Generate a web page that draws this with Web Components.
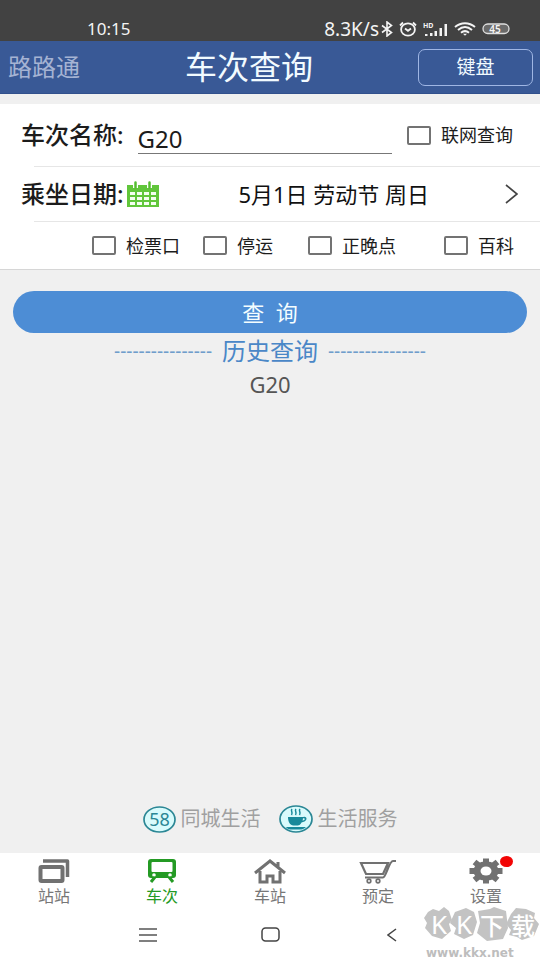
<!DOCTYPE html>
<html lang="zh-CN">
<head>
<meta charset="utf-8">
<meta name="viewport" content="width=device-width, initial-scale=1">
<title>车次查询</title>
<style>
html,body{margin:0;padding:0}
body{font-family:"Noto Sans","Noto Sans CJK SC",sans-serif;background:#f0f0f0;color:#1c1c1c}
</style>
</head>
<body>
<train-app></train-app>
<script>
const define = (name, html, setup) => {
  const t = document.createElement('template');
  t.innerHTML = '<style>*{box-sizing:border-box}svg{display:block;flex:none}button,input{font:inherit;color:inherit;margin:0}</style>' + html;
  customElements.define(name, class extends HTMLElement {
    constructor() {
      super();
      this.attachShadow({mode: 'open'}).append(t.content.cloneNode(true));
    }
    connectedCallback() { if (setup) setup(this, this.shadowRoot); }
  });
};

define('status-bar', `
<style>
:host{display:flex;align-items:center;justify-content:space-between;height:41px;padding:17px 30px 0 87px;background:#424242;color:#f4f4f4;font-size:17px;line-height:24px}
.r{display:flex;align-items:center;gap:6px}
.speed{font-size:19px;margin-right:-4px}
</style>
<span>10:15</span>
<div class="r">
<span class="speed">8.3K/s</span>
<svg width="12" height="16" viewBox="0 0 12 16" fill="none" stroke="#f4f4f4" stroke-width="1.6"><path d="M1 4.5 10.5 11.5 6 15V1l4.500 3.500L1 11.500"/></svg>
<svg width="18" height="16" viewBox="0 0 18 16" fill="none" stroke="#f4f4f4" stroke-width="1.8"><ellipse cx="9" cy="8.500" rx="6.900" ry="6.200"/><path d="M1 4.500 4 1.500M17 4.500 14 1.500M6 7.500 9 9.800 12 7.500"/></svg>
<svg width="25" height="15" viewBox="0 0 25 15" fill="#f4f4f4"><path d="M2 12h2.500v2H2zM7 11h2.500v3H7zM11.500 9H14v5h-2.500zM16.500 6H19v8h-2.500zM21.500 2H24v12h-2.500z"/><text x="0" y="6" font-size="7" font-weight="700">HD</text></svg>
<svg width="22" height="14" viewBox="0 0 22 14" fill="none" stroke="#f4f4f4" stroke-width="2"><path d="M1 5C7 0 15 0 21 5M4 8C8.500 4.200 13.500 4.200 18 8M7 10.800C9.500 8.700 12.500 8.700 15 10.800"/><path d="M9 11.800h4l-2 2z" fill="#f4f4f4" stroke="none"/></svg>
<svg width="28" height="12" viewBox="0 0 28 12"><rect x="1" y="1" width="26" height="9.500" rx="4.750" fill="#6a6a6a" stroke="#e0e0e0" stroke-width="1.300"/><text x="13" y="9.500" text-anchor="middle" font-size="10" font-weight="600" fill="#f4f4f4">45</text></svg>
</div>`);

define('title-bar', `
<style>
:host{display:grid;grid-template-columns:auto 1fr auto;align-items:center;height:53px;padding:0 7px 0 8px;background:#395996;color:#f2fbff;border-bottom:1px solid #31508c}
a{color:#a5b3d3;text-decoration:none;font-size:24px;line-height:32px}
h1{margin:0;font-size:32px;line-height:44px;font-weight:400;text-align:center}
button{width:115px;height:37px;padding:0;border:1px solid #9fb6e4;border-radius:7px;background:none;font-size:19px;line-height:32px}
</style>
<a href="#home">路路通</a><h1><slot></slot></h1><button type="button">键盘</button>`);

define('check-item', `
<style>
:host{display:block}
label{display:flex;align-items:center;gap:10px;font-size:18px;line-height:24px;white-space:nowrap}
input{appearance:none;width:24px;height:19px;border:2px solid #737373;border-radius:2px;background:#fff}
input:checked{background:#4d8dd5}
</style>
<label><input type="checkbox"><slot></slot></label>`);

define('query-form', `
<style>
:host{display:block;margin-top:10px;background:#fff;border-bottom:1px solid #d6d6d6}
.row{display:flex;align-items:center;padding:0 27px 0 21px}
.name{height:62px}
.label{font-size:24px;font-weight:500;line-height:32px;white-space:nowrap}
.name input{flex:1;min-width:0;height:36px;margin:2px 15px 0 14px;padding:6px 0 0;border:0;border-bottom:1px solid #777;border-radius:0;background:none;font-size:24px;line-height:28px;outline:0}
hr{margin:0 0 0 34px;border:0;border-top:1px solid #e6e6e6}
.date{width:100%;height:54px;gap:3px;padding-right:22px;border:0;background:none;text-align:left}
.date .value{flex:1;text-align:center;font-size:22px;line-height:30px;color:#111;padding-left:4px}
.opts{display:grid;grid-template-columns:111fr 105fr 136fr 70fr;height:47px;padding:0 26px 0 92px}
</style>
<div class="row name"><label class="label" for="train">车次名称:</label><input id="train" type="text" value="G20"><check-item>联网查询</check-item></div>
<hr>
<button type="button" class="row date"><span class="label">乘坐日期:</span>
<svg width="32" height="26" viewBox="0 0 32 26"><path d="M0 4h32v22H0z" fill="#61c63b"/><path d="M8.500 1v6M22.500 1v6" stroke="#fff" stroke-width="5"/><path d="M8.500 1.500v5M22.500 1.500v5" stroke="#55bd30" stroke-width="2.500" stroke-linecap="round"/><path d="M3 11h5v3H3zM10 11h5v3h-5zM17 11h5v3h-5zM24 11h5v3h-5zM3 16h5v3H3zM10 16h5v3h-5zM17 16h5v3h-5zM24 16h5v3h-5zM3 21h5v3H3zM10 21h5v3h-5zM17 21h5v3h-5zM24 21h5v3h-5z" fill="#f4fff0"/></svg>
<span class="value">5月1日 劳动节 周日</span>
<svg width="13" height="20" viewBox="0 0 13 20" fill="none" stroke="#444" stroke-width="1.700"><path d="M1 1 12 10 1 19"/></svg></button>
<hr>
<div class="row opts"><check-item>检票口</check-item><check-item>停运</check-item><check-item>正晚点</check-item><check-item>百科</check-item></div>`);

define('query-history', `
<style>
:host{display:block;padding:21px 13px 0}
.go{display:block;width:100%;height:42px;padding:0;border:0;border-radius:21px;background:#4d8dd5;color:#f4fdff;font-size:22px;line-height:40px}
h2{display:flex;justify-content:center;align-items:center;gap:10px;margin:2px 0 0;color:#4a87c7;font-size:24px;line-height:32px;font-weight:400}
h2 span{font-size:19px;color:#6f9dcb}
.item{display:block;margin:1px auto 0;padding:0;border:0;background:none;color:#555;font-size:22px;line-height:32px}
</style>
<button class="go" type="button">查&nbsp;&nbsp;询</button>
<h2><span>----------------</span>历史查询<span>----------------</span></h2>
<button class="item" type="button">G20</button>`);

define('service-links', `
<style>
:host{display:flex;justify-content:center;gap:18px;margin-top:auto;padding:0 0 18px}
a{display:flex;align-items:center;gap:5px;color:#a0a0a0;text-decoration:none;font-size:20px;line-height:32px}
</style>
<a href="#city"><svg width="33" height="27" viewBox="0 0 33 27"><ellipse cx="16.500" cy="13.500" rx="15.500" ry="12.500" fill="#d9fbfc" stroke="#2b8795" stroke-width="1.700"/><text x="16.500" y="20" text-anchor="middle" font-size="18" fill="#2b8795">58</text></svg>同城生活</a>
<a href="#life"><svg width="34" height="28" viewBox="0 0 34 28"><ellipse cx="17" cy="14" rx="16" ry="13" fill="#d9fbfc" stroke="#2b8795" stroke-width="1.700"/><path d="M9 12h15.500c3-1 4.500 3 1 4.500l-3 1c-1 2-2 3-4 3h-4c-3.500 0-5.500-4-5.500-8.500zM7 22h20c-2 2-4 2.500-6 2.500h-8c-2.500 0-5-.5-6-2.500z" fill="#188a9b"/><path d="M24 13.300c2-.7 2.500 1 .6 2l-1 .4z" fill="#d9fbfc"/><path d="M13 4c-2 2 1.500 3-.5 6M17 4c-2 2 1.500 3-.5 6M21 4c-2 2 1.500 3-.5 6" fill="none" stroke="#188a9b" stroke-width="1.500"/></svg>生活服务</a>`);

define('tab-item', `
<style>
:host{flex:1;display:block}
a{display:flex;flex-direction:column;align-items:center;color:#777;text-decoration:none;font-size:16px;line-height:22px}
:host([active]) a{color:#249a24}
.icon{display:flex;align-items:center;height:32px;padding-top:4px;position:relative}
.icon i{display:none;position:absolute;right:-10px;top:3px;width:13px;height:11px;border-radius:50%;background:#f20505}
:host([badge]) i{display:block}
</style>
<a><span class="icon"><slot name="icon"></slot><i></i></span><slot></slot></a>`,
(el, root) => { root.querySelector('a').href = '#' + el.getAttribute('to'); });

define('tab-bar', `
<style>
:host{display:flex;height:58px;background:#fff}
</style>
<tab-item to="route"><svg slot="icon" width="32" height="24" viewBox="0 0 32 24" fill="none" stroke="#717171" stroke-width="4"><rect x="2.500" y="8" width="22" height="14" rx="1"/><path d="M5 2H29.500V18" stroke-width="3.500" stroke-linejoin="round"/></svg>站站</tab-item>
<tab-item to="train" active><svg slot="icon" width="28" height="24" viewBox="0 0 28 24"><path d="M3 0h22q3 0 3 3v13q0 3-3 3H3q-3 0-3-3V3q0-3 3-3z" fill="#249a24"/><rect x="3.500" y="3" width="21" height="10" rx="1" fill="#fff"/><circle cx="6" cy="16" r="1.800" fill="#fff"/><circle cx="22" cy="16" r="1.800" fill="#fff"/><path d="M7 18 3 23M21 18 25 23" stroke="#249a24" stroke-width="3"/></svg>车次</tab-item>
<tab-item to="station"><svg slot="icon" width="34" height="25" viewBox="0 0 34 25" fill="none" stroke="#717171" stroke-width="3"><path d="M2 14 17 2 32 14M7 12V23H14V17H20V23H27V12M25 8V3"/></svg>车站</tab-item>
<tab-item to="booking"><svg slot="icon" width="38" height="25" viewBox="0 0 38 25" fill="none" stroke="#717171" stroke-width="2.200"><path d="M2 4H29L24 15H7ZM6 18.500H24C27 18.500 30 2 34 2H37"/><circle cx="10" cy="22" r="1.800" stroke-width="1.700"/><circle cx="19" cy="22" r="1.800" stroke-width="1.700"/></svg>预定</tab-item>
<tab-item to="settings" badge><svg slot="icon" width="34" height="26" viewBox="-17 -13 34 26"><g stroke="#717171" stroke-width="6"><path d="M0-12.500V12.500M-16.500 0H16.500M-11.500-9 11.500 9M11.500-9-11.500 9"/></g><ellipse rx="12.500" ry="9.800" fill="#717171"/><ellipse rx="5.500" ry="4.500" fill="#fff"/></svg>设置</tab-item>`);

define('system-nav', `
<style>
:host{display:flex;justify-content:center;height:49px;background:#fff}
button{width:122px;height:47px;padding:0;border:0;background:none;display:flex;align-items:center;justify-content:center}
</style>
<button type="button" aria-label="菜单"><svg width="18" height="14" viewBox="0 0 18 14" stroke="#555" stroke-width="1.400"><path d="M0 1H18M0 7H18M0 13H18"/></svg></button>
<button type="button" aria-label="主屏幕"><svg width="19" height="15" viewBox="0 0 19 15" fill="none" stroke="#444" stroke-width="1.500"><rect x="1" y="1" width="17" height="13" rx="3.500"/></svg></button>
<button type="button" aria-label="返回"><svg width="10" height="14" viewBox="0 0 10 14" fill="none" stroke="#444" stroke-width="1.500"><path d="M9 1 1 7 9 13"/></svg></button>`);

define('site-mark', `
<style>
:host{display:block;position:absolute;right:0;bottom:0;width:116px;pointer-events:none}
</style>
<svg width="116" height="54" viewBox="0 0 116 54">
<g fill="#c3c3c3"><path d="M4 6 9 3 15 5 20 1 25 5 28 14 25 18 27 25 18 33 8 30 1 22 3 17 0 12Z"/><path d="M31 6 42 2 50 6 53 16 49 29 40 33 30 28 32 22 26 17Z"/><path d="M54 5 66 3 70 1 82 5 84 22 79 33 63 35 53 27 56 17Z"/><path d="M87 8 92 2 102 3 111 7 110 12 115 18 110 30 98 34 93 31 85 29 87 24 82 18Z"/></g>
<g fill="#fff" text-anchor="middle"><text x="15" y="28" font-size="26">K</text><text x="40" y="28" font-size="26">K</text><text x="68" y="29" font-size="24" font-weight="500">下</text><text x="99" y="29" font-size="24" font-weight="500">载</text></g>
<text x="2" y="51" font-size="12" font-weight="700" font-family="DejaVu Sans, sans-serif" fill="#bdbdbd">www.kkx.net</text>
</svg>`);

define('train-app', `
<style>
:host{display:flex;flex-direction:column;min-height:100vh;position:relative}
</style>
<status-bar></status-bar>
<title-bar>车次查询</title-bar>
<query-form></query-form>
<query-history></query-history>
<service-links></service-links>
<tab-bar></tab-bar>
<system-nav></system-nav>
<site-mark></site-mark>`);
</script>
</body>
</html>
